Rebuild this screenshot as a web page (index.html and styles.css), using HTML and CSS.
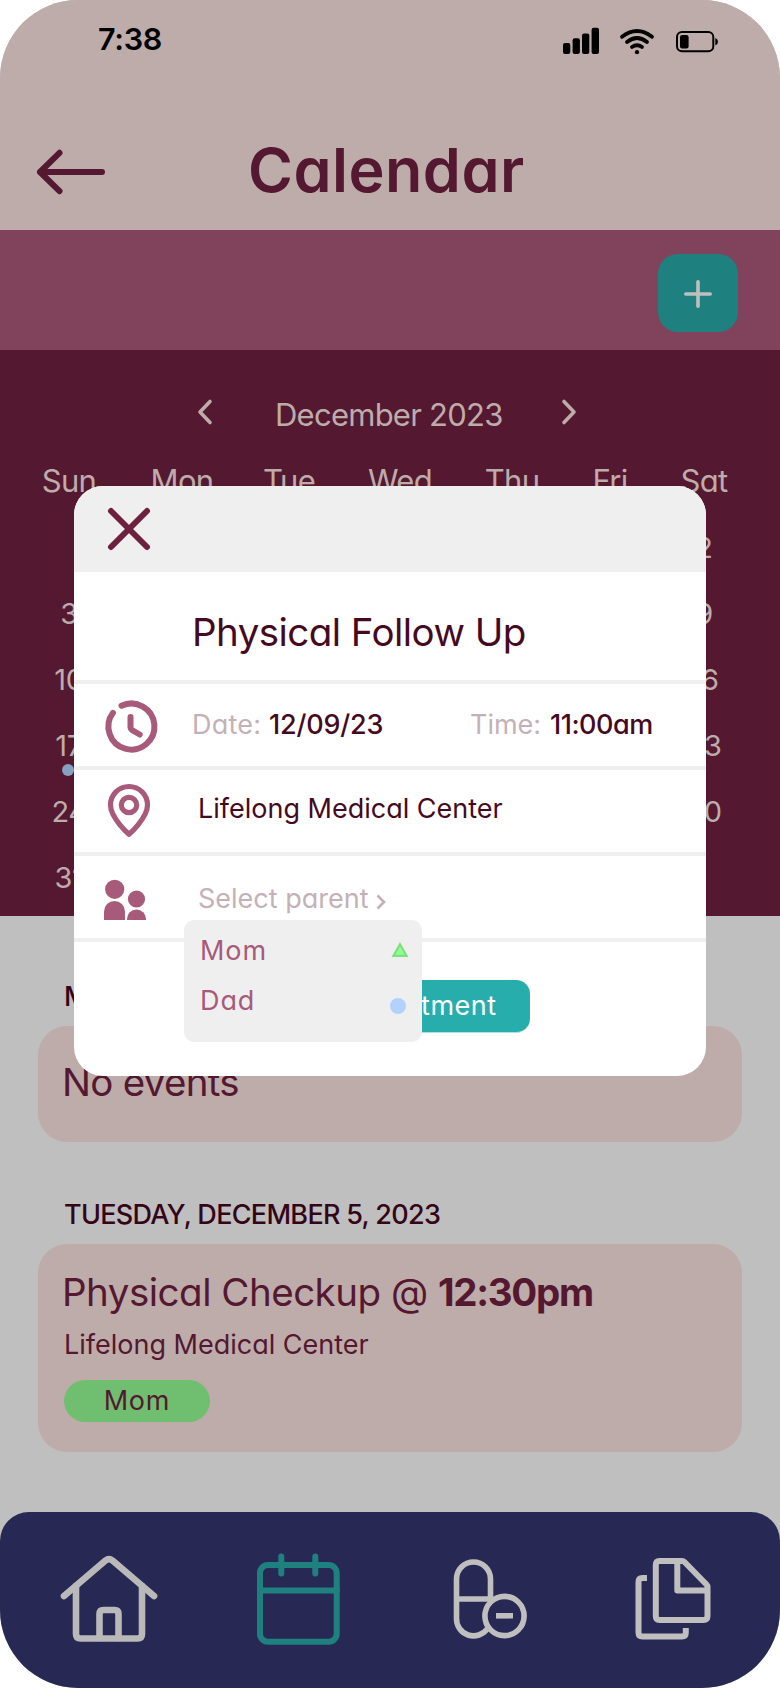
FILE: index.html
```html
<!DOCTYPE html>
<html lang="en">
<head>
<meta charset="utf-8">
<title>Calendar</title>
<link rel="stylesheet" href="styles.css">
</head>
<body>
<div class="phone">
  <header class="header">
    <div class="status">
      <span class="clock">7:38</span>
      <svg class="status-icons" width="156" height="28" viewBox="562 27 156 28">
        <rect x="563" y="43" width="7.3" height="11" rx="2"/>
        <rect x="572.6" y="38.2" width="7.3" height="15.8" rx="2"/>
        <rect x="582" y="33.6" width="7.3" height="20.4" rx="2"/>
        <rect x="591.6" y="27.8" width="7.4" height="26.2" rx="2"/>
        <g fill="none" stroke="#000" stroke-width="3.8" stroke-linecap="round">
          <path d="M622 36.800 Q637 25.200 652 36.800"/>
          <path d="M627 42 Q637 34 647 42"/>
          <path d="M632 47 Q637 43.400 642 47"/>
        </g>
        <circle cx="637" cy="52.200" r="2.100"/>
        <rect x="677" y="32" width="36.300" height="19.300" rx="5" fill="none" stroke="#000" stroke-width="2"/>
        <rect x="680" y="35" width="8.600" height="13.400" rx="2.200"/>
        <path d="M715.300 38Q718 39 718 41.700Q718 44.400 715.300 45.400Z"/>
      </svg>
    </div>
    <div class="title-row">
      <svg class="back" width="70" height="46" viewBox="36 149 70 46"><path d="M102 172H40M59.500 152.800L40 172L59.500 191.200"/></svg>
      <h1 class="title">Calendar</h1>
    </div>
  </header>
  <div class="toolbar">
    <button class="add"><svg width="30" height="30" viewBox="0 0 30 30"><path d="M15 2.800V27.200M2.800 15H27.200"/></svg></button>
  </div>
  <section class="calendar">
    <div class="month">
      <svg width="16" height="26" viewBox="0 0 16 26"><path d="M13 2.500L3 13L13 23.500"/></svg>
      <span class="month-name">December 2023</span>
      <svg width="16" height="26" viewBox="0 0 16 26"><path d="M3 2.500L13 13L3 23.500"/></svg>
    </div>
    <div class="grid weekdays">
      <span>Sun</span><span>Mon</span><span>Tue</span><span>Wed</span><span>Thu</span><span>Fri</span><span>Sat</span>
    </div>
    <div class="grid dates">
      <span></span><span></span><span></span><span></span><span></span><span>1</span><span>2</span>
      <span>3</span><span>4</span><span>5</span><span>6</span><span>7</span><span>8</span><span>9</span>
      <span>10</span><span>11</span><span>12</span><span>13</span><span>14</span><span>15</span><span>16</span>
      <span class="marked">17</span><span>18</span><span>19</span><span>20</span><span>21</span><span>22</span><span>23</span>
      <span>24</span><span>25</span><span>26</span><span>27</span><span>28</span><span>29</span><span>30</span>
      <span>31</span>
    </div>
  </section>
  <main class="events">
    <h2 class="day">MONDAY, DECEMBER 4, 2023</h2>
    <article class="card card-empty"><p class="event-title none">No events</p></article>
    <h2 class="day day-second">TUESDAY, DECEMBER 5, 2023</h2>
    <article class="card card-event">
      <p class="event-title">Physical Checkup @ <b>12:30pm</b></p>
      <p class="place">Lifelong Medical Center</p>
      <span class="tag">Mom</span>
    </article>
  </main>
  <nav class="nav">
    <svg width="100" height="100" viewBox="56 1550 100 100" class="nav-home">
      <path d="M64 1596L105.500 1560.500Q109 1557.800 112.500 1560.500L154 1596"/>
      <path d="M76 1586V1634Q76 1638.500 80.500 1638.500H137.500Q142 1638.500 142 1634V1586"/>
      <path d="M99.500 1638V1614Q99.500 1610 103.500 1610H114.500Q118.500 1610 118.500 1614V1638"/>
    </svg>
    <svg width="88" height="100" viewBox="256 1550 88 100" class="nav-calendar">
      <rect x="260" y="1565" width="76.700" height="76.700" rx="8"/>
      <path d="M260 1590.500H337M281.300 1556.500V1573.500M315.300 1556.500V1573.500"/>
    </svg>
    <svg width="86" height="100" viewBox="444 1550 86 100" class="nav-pill">
      <path d="M490.500 1598V1579A17 17 0 0 0 456.500 1579V1618A17 17 0 0 0 487.500 1628.500M456.500 1599H491"/>
      <circle cx="504.500" cy="1616" r="19.600"/>
      <path d="M496 1615.800H513"/>
    </svg>
    <svg width="82" height="100" viewBox="630 1550 82 100" class="nav-docs">
      <path d="M659.500 1561H682Q683.500 1561 684.500 1562L706.500 1584.500Q707.500 1585.500 707.500 1587V1616Q707.500 1620 703.500 1620H659.500Q655.800 1620 655.800 1616V1565Q655.800 1561 659.500 1561Z"/>
      <path d="M677.300 1561V1590.500H707"/>
      <path d="M647 1578H642.500Q638.500 1578 638.500 1582V1632.500Q638.500 1636.500 642.500 1636.500H682Q685.800 1636.500 685.800 1632.500V1628"/>
    </svg>
  </nav>

  <div class="modal">
    <div class="modal-head">
      <svg width="46" height="46" viewBox="0 0 46 46"><path d="M5 5L41 41M41 5L5 41"/></svg>
    </div>
    <div class="modal-title">Physical Follow Up</div>
    <div class="row">
      <svg class="row-icon line" width="120" height="82" viewBox="74 684 120 82">
        <path d="M121.500 705.800A23 23 0 1 1 113 712.800"/>
        <path d="M130.500 717V727.500Q130.500 729 132 730L139.700 734.500"/>
      </svg>
      <div class="when"><span class="label date-label">Date:</span><span class="value date-value">12/09/23</span><span class="label time-label">Time:</span><span class="value time-value">11:00am</span></div>
    </div>
    <div class="row">
      <svg class="row-icon pin" width="120" height="82" viewBox="74 770 120 82">
        <path d="M129 834.300C129 834.300 147.500 818 147.500 805A18.500 18.500 0 0 0 110.500 805C110.500 818 129 834.300 129 834.300Z"/>
        <circle cx="129" cy="805" r="7.700"/>
      </svg>
      <span class="value location">Lifelong Medical Center</span>
    </div>
    <div class="row">
      <svg class="row-icon people" width="120" height="82" viewBox="74 856 120 82">
        <circle cx="114.700" cy="889.300" r="9.600"/>
        <path d="M104 920V911.500A10.500 10.500 0 0 1 125 911.500V920Z"/>
        <circle cx="136.500" cy="899" r="8.600"/>
        <path d="M127 920V919A9.500 9.500 0 0 1 146 919V920Z"/>
      </svg>
      <span class="label select">Select parent</span>
      <svg class="more" width="12" height="18" viewBox="0 0 12 18"><path d="M2.500 2.500L9 9L2.500 15.500"/></svg>
    </div>
    <div class="actions"><button class="submit">Add Appointment</button></div>
    <div class="menu">
      <div class="option"><span class="mom">Mom</span>
        <svg width="18" height="18" viewBox="0 0 18 18" class="tri"><path d="M9 3.300L15.600 14.800H2.400Z"/></svg></div>
      <div class="option"><span class="dad">Dad</span><i class="dot"></i></div>
    </div>
  </div>
</div>
</body>
</html>
```
FILE: styles.css
```css
* { box-sizing: border-box; margin: 0; padding: 0; }
body {
  background: #fff;
  font-family: Inter, Lato, "Liberation Sans", sans-serif;
  font-feature-settings: "cv11" 1, "calt" 0;
}
svg { display: block; flex: none; overflow: visible; }
button { border: 0; font: inherit; font-feature-settings: inherit; }
span, h1, h2, p, button { white-space: nowrap; }

.phone {
  position: relative;
  width: 780px;
  height: 1688px;
  display: flex;
  flex-direction: column;
  border-radius: 78px;
  overflow: hidden;
  background: #bfbfbf;
}

/* header */
.header { height: 230px; background: #beacab; }
.status { display: flex; justify-content: space-between; padding: 19px 62px 0 98px; height: 110px; }
.clock { font-size: 30.5px; font-weight: 600; line-height: 40px; color: #000; letter-spacing: -0.3px; }
.status-icons { margin-top: 8px; }
.title-row { display: flex; align-items: center; height: 120px; padding-left: 36px; }
.back { margin-top: 4px; fill: none; stroke: #541830; stroke-width: 6; stroke-linecap: round; stroke-linejoin: round; }
.title { margin-left: 142px; font-size: 61px; font-weight: 600; line-height: 120px; color: #541830; letter-spacing: 0.5px; }

.toolbar { height: 120px; display: flex; justify-content: flex-end; padding: 24px 42px 0; background: #80435b; }
.add { width: 80px; height: 78px; display: grid; place-items: center; padding-top: 2px; border-radius: 20px; background: #1f8080; }
.add path { fill: none; stroke: #bfbfbf; stroke-width: 3.6; stroke-linecap: round; }

/* calendar */
.calendar { height: 566px; padding-top: 32px; background: #541830; color: #beacab; }
.month { display: flex; align-items: center; height: 66px; padding-left: 197px; }
.month svg { margin-bottom: 6px; fill: none; stroke: #beacab; stroke-width: 3.6; stroke-linecap: round; stroke-linejoin: round; }
.month-name { width: 226px; margin: 0 60px 0 62px; font-size: 31px; line-height: 66px; letter-spacing: -0.75px; }
.grid { display: grid; grid-template-columns: 112px 114px 100px 122px 102px 94px 94px; padding-left: 13px; text-align: center; line-height: 66px; }
.weekdays { font-size: 31px; letter-spacing: -0.7px; }
.dates { grid-auto-rows: 66px; font-size: 29px; line-height: 68px; letter-spacing: -0.4px; }
.marked { position: relative; }
.marked::after { content: ""; position: absolute; left: 49px; top: 52px; width: 12px; height: 12px; border-radius: 50%; background: #86a0c0; }

/* events */
.events { flex: 1; padding: 60px 38px 0; }
.day { padding-left: 26px; font-size: 27px; font-weight: 500; line-height: 42px; height: 40px; color: #330517; letter-spacing: -0.7px; }
.day-second { margin-top: 52px; }
.card { margin-top: 10px; padding-left: 26px; border-radius: 29px; background: #beacab; color: #541830; }
.card-empty { height: 116px; padding-top: 31px; }
.card-event { height: 208px; padding-top: 23px; }
.event-title { margin-left: -2px; font-size: 38.5px; line-height: 50px; letter-spacing: -0.5px; }
.none { letter-spacing: -0.7px; }
.event-title b { font-weight: 700; letter-spacing: -1.3px; }
.place { margin-top: 6px; font-size: 27px; line-height: 44px; letter-spacing: 0; }
.tag { display: block; width: 146px; height: 42px; margin-top: 13px; border-radius: 21px; background: #70bf70; text-align: center; font-size: 27px; line-height: 42px; letter-spacing: 0.8px; }

/* bottom navigation */
.nav { display: flex; gap: 100px; height: 176px; padding: 38px 0 0 56px; border-radius: 29px 29px 0 0; background: #282855; }
.nav svg { fill: none; stroke: #bfbfbf; stroke-width: 6; }
.nav .nav-home { stroke: #b9b9b9; stroke-width: 6.6; stroke-linecap: round; stroke-linejoin: round; }
.nav .nav-calendar { stroke: #1f8080; stroke-linecap: round; }
.nav .nav-pill { stroke-width: 5.6; }
.nav-docs { stroke-linejoin: round; }

/* modal */
.modal { position: absolute; left: 74px; top: 486px; width: 632px; height: 590px; border-radius: 29px; background: #fff; color: #440a22; }
.modal-head { height: 86px; padding: 20px 0 0 32px; border-radius: 29px 29px 0 0; background: #efefef; }
.modal-head path { fill: none; stroke: #6e213f; stroke-width: 6; stroke-linecap: round; }
.modal-title { height: 112px; padding-left: 118px; border-bottom: 4px solid #efefef; font-size: 38.5px; line-height: 120px; white-space: nowrap; letter-spacing: -0.55px; }
.row { display: flex; height: 86px; border-bottom: 4px solid #efefef; font-size: 27px; line-height: 82px; }
.line { fill: none; stroke: #a85a7a; stroke-width: 6; stroke-linecap: round; }
.pin { fill: none; stroke: #a85a7a; stroke-width: 5.2; stroke-linejoin: round; }
.people { fill: #a85a7a; }
.when { display: flex; margin-left: -2px; }
.label { color: #c4b1b8; }
.date-label { width: 77px; letter-spacing: 0.2px; }
.value { font-weight: 500; color: #440a22; }
.date-value { width: 201px; letter-spacing: -0.2px; }
.time-label { width: 80px; }
.time-value { letter-spacing: -0.5px; }
.location { padding-left: 4px; font-weight: 400; line-height: 78px; }
.select { width: 181px; padding-left: 4px; line-height: 86px; }
.more { margin-top: 37px; fill: none; stroke: #c4b1b8; stroke-width: 2.6; }
.actions { display: flex; justify-content: center; padding-top: 38px; }
.submit { width: 280px; height: 53px; border-radius: 14px; border-bottom: 1px solid #b0dfdf; background: #28adad; color: #fff; font-size: 27px; line-height: 50px; padding: 0 17px 0 0; letter-spacing: 0.5px; }
.menu { position: absolute; left: 110px; top: 434px; width: 238px; height: 122px; padding: 5px 16px 0; border-radius: 10px; background: #efefef; color: #a85a7a; font-size: 27px; line-height: 52px; letter-spacing: 0.9px; }
.option { display: flex; justify-content: space-between; align-items: center; height: 50px; }
.option span { position: relative; top: 1px; }
.tri { margin-right: -3px; fill: #8fff8f; stroke: #80df80; stroke-width: 2.2; }
.dot { width: 16px; height: 16px; margin: 12px 0 0; border-radius: 50%; background: #b3d1ff; }
```
